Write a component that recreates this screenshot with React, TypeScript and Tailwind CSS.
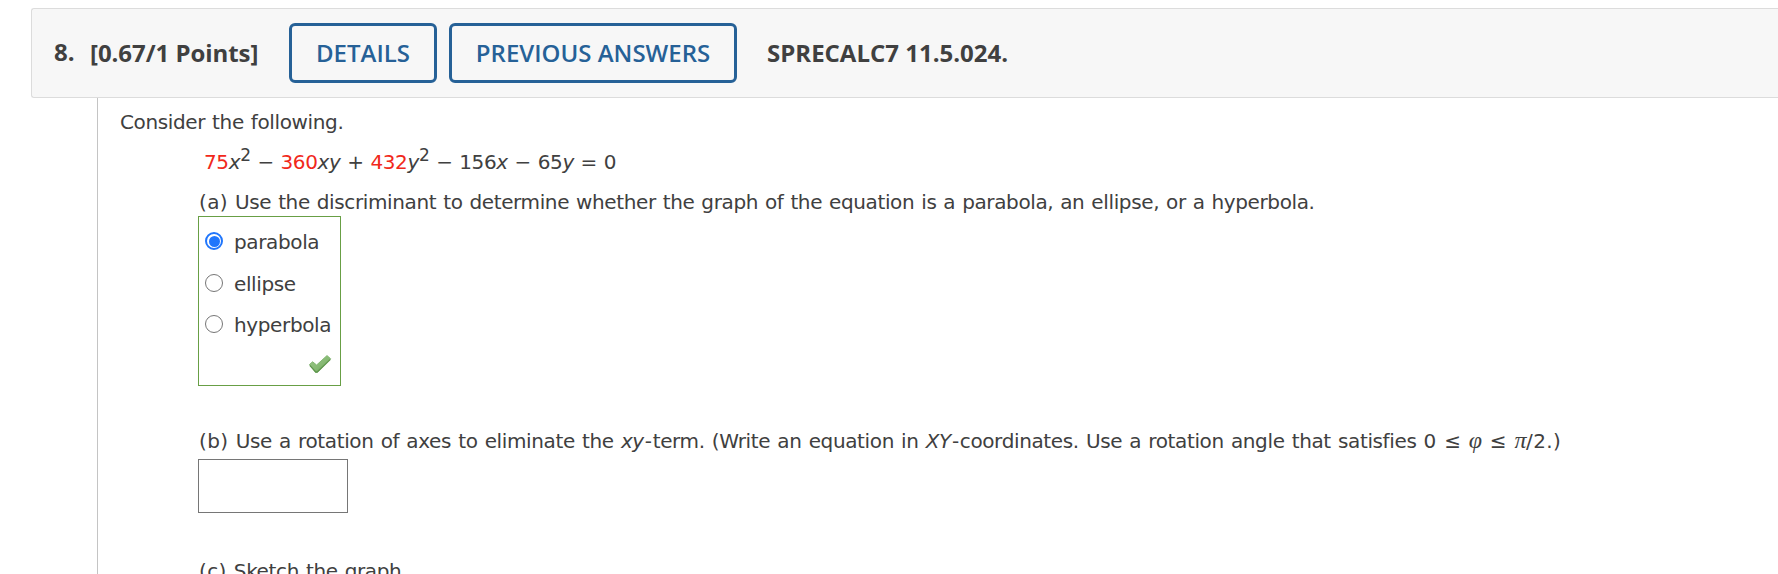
import React from "react";

const choices = ["parabola", "ellipse", "hyperbola"];

function Radio({ label, checked }: { label: string; checked: boolean }) {
  return (
    <label className="flex h-[41.5px] items-start">
      <span
        className={
          checked
            ? "flex size-[18px] shrink-0 items-center justify-center rounded-full border-2 border-[#2076fc] bg-white"
            : "size-[18px] shrink-0 rounded-full border-[1.5px] border-[#767676] bg-white"
        }
      >
        {checked && <span className="size-[11px] shrink-0 rounded-full bg-[#2076fc]" />}
      </span>
      <span className="ml-[11px] leading-[20px]">{label}</span>
    </label>
  );
}

function CheckMark() {
  return (
    <svg className="h-[20px] w-[24px]" viewBox="0 0 24 20">
      <defs>
        <linearGradient id="tick" x1="0" y1="0" x2="1" y2="1">
          <stop offset="0" stopColor="#9cc98a" />
          <stop offset="0.55" stopColor="#86b973" />
          <stop offset="1" stopColor="#69a156" />
        </linearGradient>
      </defs>
      <path
        d="M1.5 10.5 L4.6 7.8 L8.6 11 L19 1.6 L22.6 4.7 L9.3 18.3 L7.6 18.3 Z"
        fill="url(#tick)"
        stroke="#84b873"
        strokeWidth="1"
        strokeLinejoin="round"
      />
      <path d="M1.8 11.4 L7.7 18 L9.2 18 L22.4 5.4" fill="none" stroke="#5f964d" strokeWidth="1.3" />
    </svg>
  );
}

export default function App() {
  return (
    <div className="h-[574px] w-full overflow-hidden bg-white pt-2 font-['DejaVu_Sans',Verdana,sans-serif] text-[20px] text-[#404040]">
      <header className="ml-[31px] flex h-[90px] items-center rounded-l-[3px] border border-r-0 border-[#dcdcdc] bg-[#f7f7f7] pl-[22px] font-['Open_Sans',sans-serif] text-[24px] font-bold text-[#404040]">
        <span className="w-[36px] shrink-0 pb-[2px] whitespace-nowrap">8.</span>
        <span className="w-[199px] shrink-0 tracking-[-0.05px] whitespace-nowrap">[0.67/1 Points]</span>
        <button className="h-[60px] w-[148px] shrink-0 rounded-[6px] border-3 border-[#266197] font-semibold text-[#266197]">
          DETAILS
        </button>
        <button className="ml-[12px] h-[60px] w-[288px] shrink-0 rounded-[6px] border-3 border-[#266197] font-semibold whitespace-nowrap text-[#266197]">
          PREVIOUS ANSWERS
        </button>
        <span className="ml-[30px] whitespace-nowrap">SPRECALC7 11.5.024.</span>
      </header>
      <main className="ml-[97px] h-[476px] border-l border-[#c4c4c4] pt-[4px] pl-[22px] tracking-[-0.37px] whitespace-nowrap [word-spacing:1px]">
        <p className="h-[40px] leading-[40px]">Consider the following.</p>
        <p className="ml-[84px] h-[40px] leading-[40px] [word-spacing:0.75px]">
          <span className="text-[#f1281b]">75</span>
          <i>x</i>
          <sup className="top-[-8px] text-[17px]">2</sup> − <span className="text-[#f1281b]">360</span>
          <i>xy</i> + <span className="text-[#f1281b]">432</span>
          <i>y</i>
          <sup className="top-[-8px] text-[17px]">2</sup> − 156<i>x</i> − 65<i>y</i> = 0
        </p>
        <section className="ml-[78px]">
          <p className="h-[34px] leading-[40px] [word-spacing:0.92px]">
            <span className="ml-px tracking-[0.4px]">(a)</span> Use the discriminant to determine whether the graph of
            the equation is a parabola, an ellipse, or a hyperbola.
          </p>
          <div className="flex h-[170px] w-[143px] flex-col border border-[#689f45] pt-[15px] pl-[6px]">
            {choices.map((c) => (
              <Radio key={c} label={c} checked={c === "parabola"} />
            ))}
            <div className="-mt-[3px] ml-[103px]">
              <CheckMark />
            </div>
          </div>
          <p className="mt-[35px] h-[38px] leading-[40px] [word-spacing:1.15px]">
            <span className="ml-px tracking-[0.4px]">(b)</span> Use a rotation of axes to eliminate the <i>xy</i>
            <span className="mx-px">-</span>term. (Write an equation in <i>XY</i>
            <span className="mx-px">-</span>coordinates. Use a rotation angle that satisfies{" "}
            <span className="[word-spacing:2.2px]">
              0 ≤ <i className="font-['Liberation_Serif',serif] text-[24px] leading-none">φ</i> ≤{" "}
              <i className="font-['Liberation_Serif',serif] text-[24px] leading-none">π</i>
              <span className="tracking-[0.4px]">/2.)</span>
            </span>
          </p>
          <input className="block h-[54px] w-[150px] border border-[#767676] bg-white" aria-label="Answer" />
          <p className="mt-[38px] h-[40px] leading-[40px]">
            <span className="ml-px tracking-[0.4px]">(c)</span> Sketch the graph.
          </p>
        </section>
      </main>
    </div>
  );
}
